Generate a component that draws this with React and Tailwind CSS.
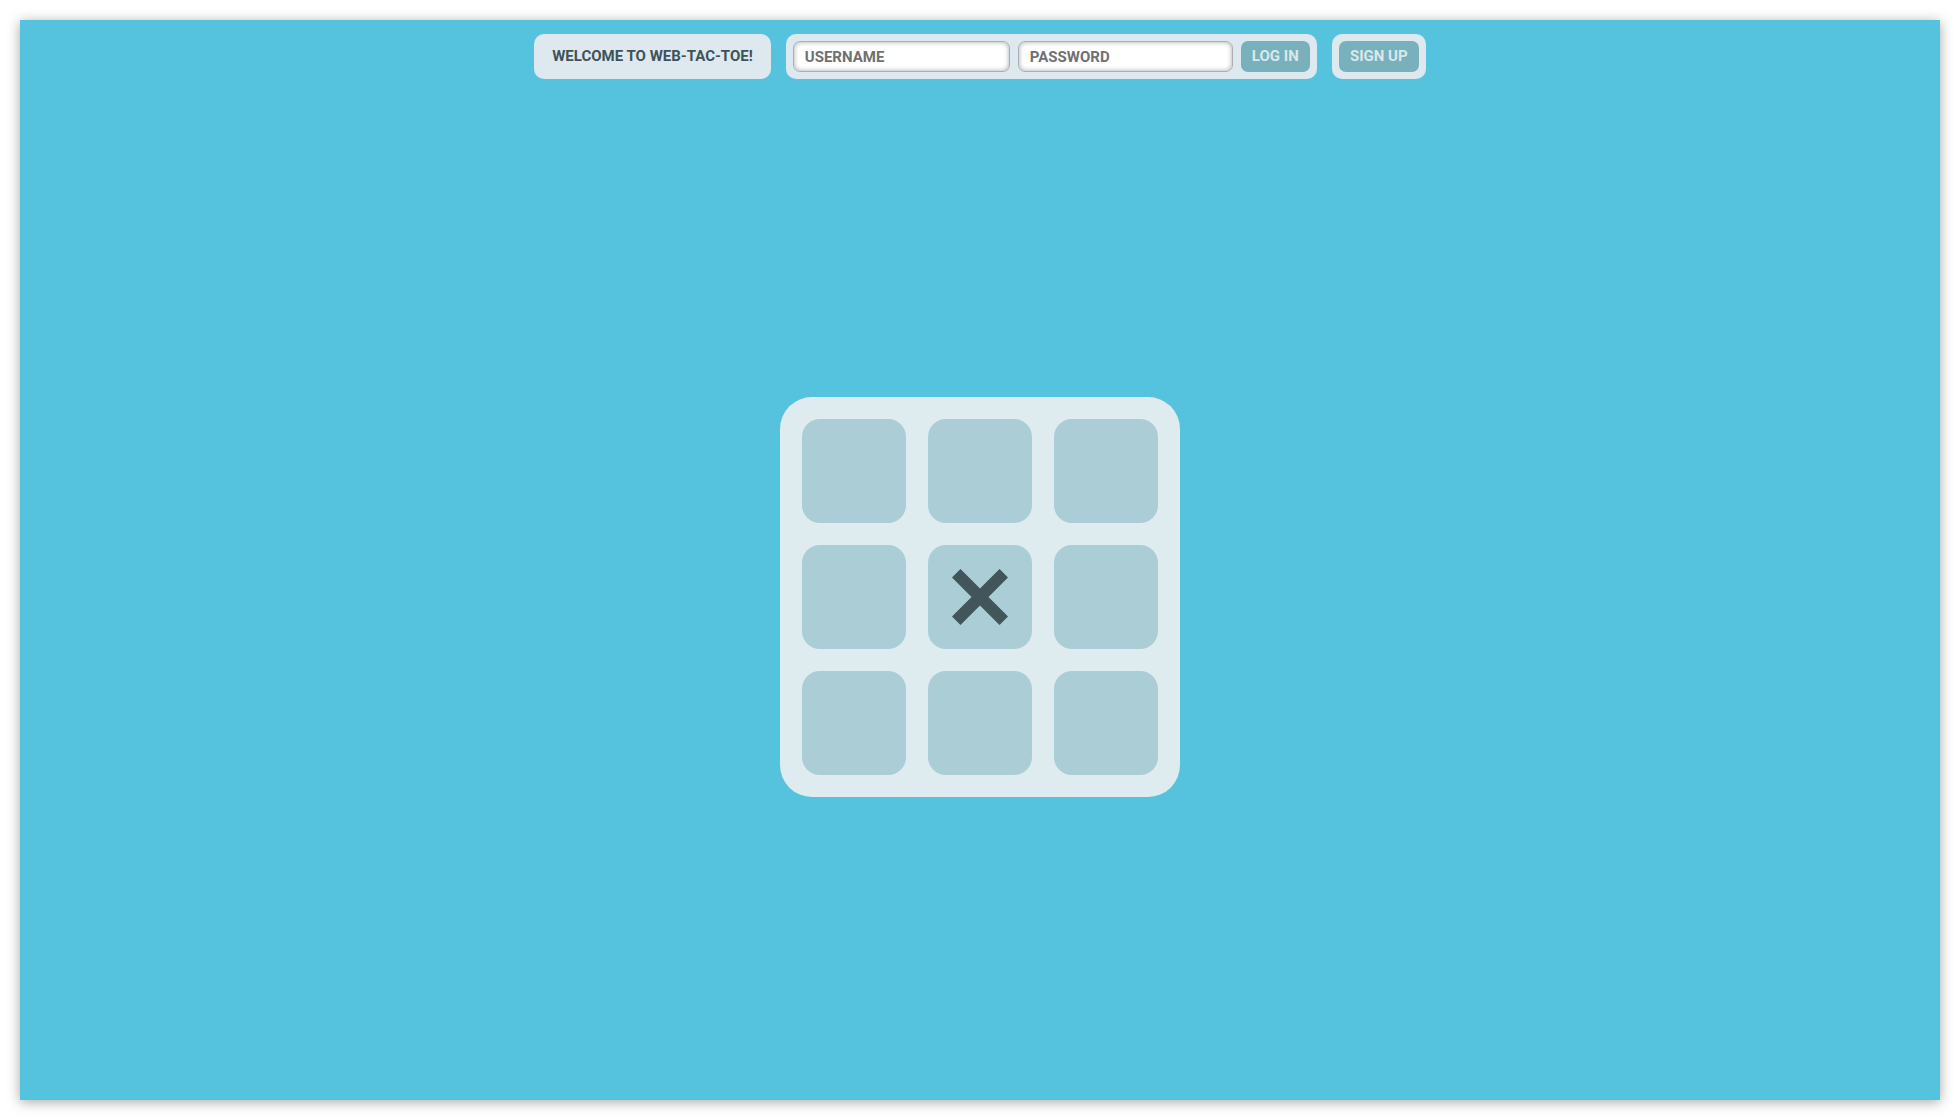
const font = { fontFamily: 'Roboto, "Open Sans", sans-serif' }

const Cross = () => (
  <svg width="56" height="56" viewBox="0 0 56 56">
    <path d="M4.24 4.24 L51.76 51.76 M51.76 4.24 L4.24 51.76" stroke="#41555b" strokeWidth="12" strokeLinecap="butt" fill="none" />
  </svg>
)

const App = () => {
  const cells = ['', '', '', '', 'x', '', '', '', '']

  return (
    <div className="min-h-screen bg-white p-[20px]" style={font}>
      <div className="h-[1080px] bg-[#56c3de] shadow-[0_2px_12px_rgba(0,0,0,0.35)] flex flex-col">
        <header className="pt-[14px] pb-[14px] flex justify-center gap-[15px]">
          <div className="h-[45px] px-[18px] rounded-[10px] bg-[#dde9ee] flex items-center">
            <span className="text-[15px] font-bold text-[#3f525a]">WELCOME TO WEB-TAC-TOE!</span>
          </div>

          <div className="h-[45px] px-[7px] rounded-[10px] bg-[#dde9ee] flex items-center gap-[8px]">
            <input type="text" placeholder="USERNAME"
              className="w-[217px] h-[31px] px-[11px] rounded-[7px] bg-white border border-[#a9b0b2] shadow-[inset_0_0_5px_rgba(0,0,0,0.35)] text-[15px] font-bold placeholder:text-[#707070] outline-none" />
            <input type="password" placeholder="PASSWORD"
              className="w-[215px] h-[31px] px-[11px] rounded-[7px] bg-white border border-[#a9b0b2] shadow-[inset_0_0_5px_rgba(0,0,0,0.35)] text-[15px] font-bold placeholder:text-[#707070] outline-none" />
            <button className="w-[69px] h-[31px] rounded-[7px] bg-[#78b0bb] text-[#d9e8ec] text-[15px] font-bold">LOG IN</button>
          </div>

          <div className="h-[45px] px-[7px] rounded-[10px] bg-[#dde9ee] flex items-center">
            <button className="w-[80px] h-[31px] rounded-[7px] bg-[#78b0bb] text-[#d9e8ec] text-[15px] font-bold">SIGN UP</button>
          </div>
        </header>

        <main className="flex-1 flex items-center justify-center">
          <div className="w-[400px] h-[400px] p-[22px] rounded-[32px] bg-[#deebef] grid grid-cols-3 gap-[22px]">
            {cells.map((c, i) => (
              <div key={i} className="w-[104px] h-[104px] rounded-[18px] bg-[#abcdd5] flex items-center justify-center">
                {c === 'x' && <Cross />}
              </div>
            ))}
          </div>
        </main>
      </div>
    </div>
  )
}

export default App
